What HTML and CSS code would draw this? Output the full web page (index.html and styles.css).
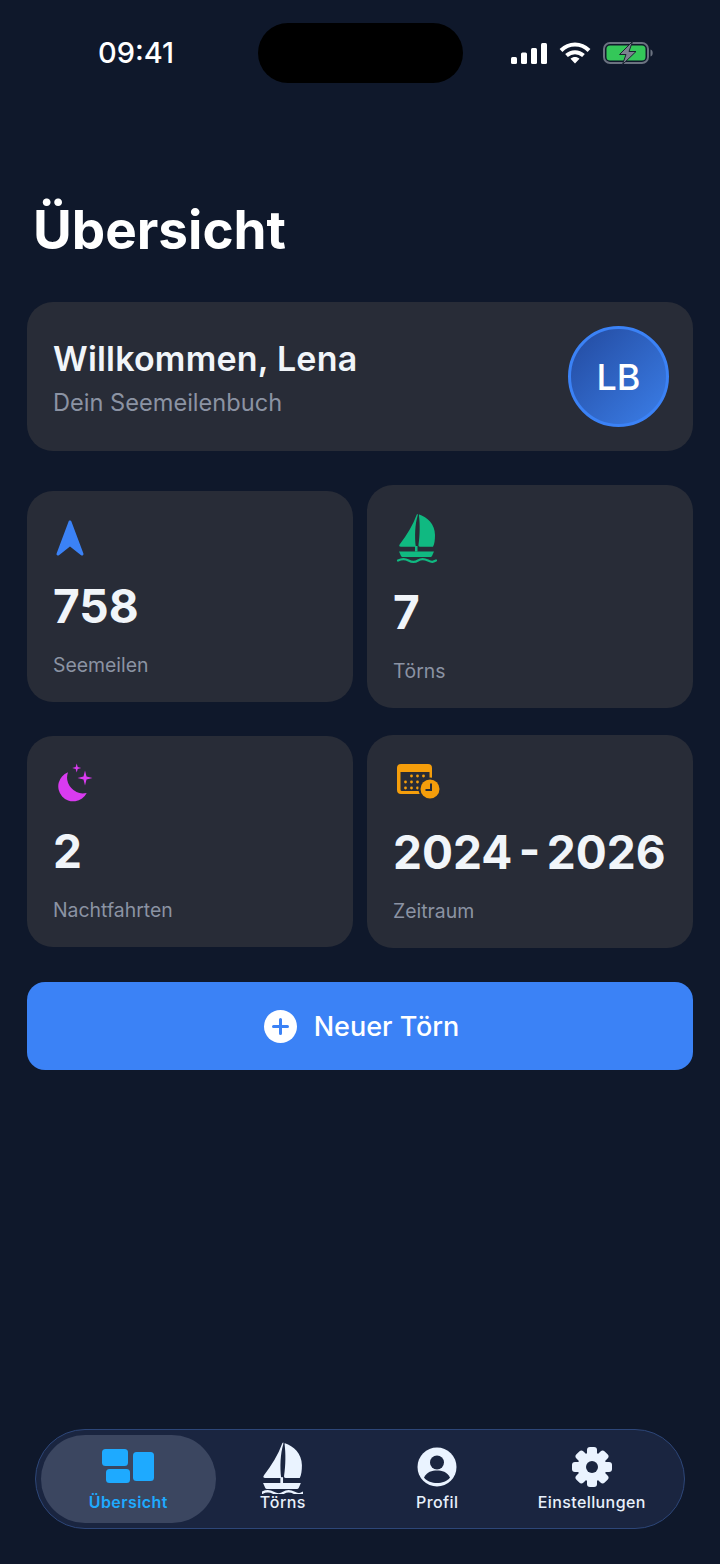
FILE: index.html
```html
<!DOCTYPE html>
<html lang="de">
<head>
<meta charset="utf-8">
<title>Übersicht</title>
<link rel="stylesheet" href="styles.css">
</head>
<body>
<svg class="defs" width="0" height="0" aria-hidden="true">
  <defs>
    <g id="boat">
      <path fill="currentColor" d="M36.800 14.500C37.800 13.500 38 14 37.700 15.500 35 24 34.500 37 35.800 46.700H21C18.900 46.700 18.800 45.500 20 44 27 35 33 25 36.800 14.500Z"/>
      <path fill="currentColor" d="M39.300 14.500C47 17 55 24 55 35 55 40 54.500 44 53 46.700H40C38.500 46.700 38.300 46 38.500 44.500 40 35 40 24 39 16 38.900 14.800 38.900 14.400 39.300 14.500Z"/>
      <path fill="currentColor" d="M35 46h2.500v5.500H35z"/>
      <path fill="currentColor" d="M19 51.500H54L52 56C51.500 56.800 51 57 50 57H23C22 57 21.500 56.800 21 56Z"/>
      <path fill="none" stroke="currentColor" stroke-width="2.200" stroke-linecap="round" d="M18 60.500C22 58.500 25 58.500 28.500 60.500S35 62.500 38 60.500 44 58.500 48 60.500 53 62 56 60.500"/>
    </g>
  </defs>
</svg>
<div class="page">
  <header class="status">
    <span class="time">09:41</span>
    <div class="island"></div>
    <div class="status-icons">
      <svg class="ic-signal" viewBox="0 0 36 21"><rect x="0" y="14" width="6" height="7" rx="1.5"/><rect x="10" y="9.500" width="6" height="11.500" rx="1.500"/><rect x="20" y="5" width="6" height="16" rx="1.500"/><rect x="30" y="0" width="6" height="21" rx="1.500"/></svg>
      <svg class="ic-wifi" viewBox="0 0 32 22"><path class="wifi-arc" d="M2 8.500C10 .5 22 .5 30 8.500"/><path class="wifi-arc" d="M7.500 13.500C12.500 9 19.500 9 24.500 13.500"/><path d="M11.500 16.800C14 14.500 18 14.500 20.500 16.800L16 21.500Z"/></svg>
      <svg class="ic-battery" viewBox="0 0 50 22"><rect x="1" y="1" width="44" height="20" rx="6" class="bat-frame"/><rect x="3.500" y="3.500" width="39" height="15" rx="3.500" class="bat-fill"/><path d="M47.500 7.500c1.500.5 2.200 1.800 2.200 3.500s-.7 3-2.200 3.500z" class="bat-nub"/><path d="M29.500-.5 16.500 12.500H23L19.500 22.500 33 9.500H26Z" class="bat-bolt"/></svg>
    </div>
  </header>

  <main class="content">
    <h1 class="title">Übersicht</h1>

    <section class="welcome">
      <div class="welcome-text">
        <h2 class="welcome-name">Willkommen, Lena</h2>
        <p class="welcome-sub">Dein Seemeilenbuch</p>
      </div>
      <div class="avatar">LB</div>
    </section>

    <section class="stats">
      <article class="stat">
        <svg class="stat-icon icon-arrow" viewBox="53 515 36 46"><path d="M70 522 58 554 70 544.500 82 554Z"/></svg>
        <div class="stat-value">758</div>
        <div class="stat-label">Seemeilen</div>
      </article>
      <article class="stat">
        <svg class="stat-icon icon-boat" viewBox="13 9 46 58"><use href="#boat"/></svg>
        <div class="stat-value">7</div>
        <div class="stat-label">Törns</div>
      </article>
      <article class="stat">
        <svg class="stat-icon icon-moon" viewBox="53 760 46 46">
          <path d="M68 772.300A15 15 0 1 0 86.700 793 16 16 0 0 1 68 772.300Z"/>
          <path d="M85 770.500 86.500 776.500 92.500 778 86.500 779.500 85 785.500 83.500 779.500 77.500 778 83.500 776.500Z"/>
          <path d="M76.700 763.500 77.700 767 81.200 768 77.700 769 76.700 772.500 75.700 769 72.200 768 75.700 767Z"/>
        </svg>
        <div class="stat-value">2</div>
        <div class="stat-label">Nachtfahrten</div>
      </article>
      <article class="stat">
        <svg class="stat-icon icon-cal" viewBox="393 759 48 48">
          <path class="cal-body" d="M401 764h27a4 4 0 0 1 4 4v22a4 4 0 0 1-4 4h-27a4 4 0 0 1-4-4v-22a4 4 0 0 1 4-4Zm-.5 8v17.500a1.500 1.500 0 0 0 1.500 1.500h26a1.500 1.500 0 0 0 1.500-1.500V772Z"/>
          <g class="cal-dots">
            <circle cx="411.500" cy="776" r="1.400"/><circle cx="417.500" cy="776" r="1.400"/><circle cx="423.500" cy="776" r="1.400"/>
            <circle cx="405.500" cy="782" r="1.400"/><circle cx="411.500" cy="782" r="1.400"/><circle cx="417.500" cy="782" r="1.400"/><circle cx="423.500" cy="782" r="1.400"/>
            <circle cx="405.500" cy="788" r="1.400"/><circle cx="411.500" cy="788" r="1.400"/><circle cx="417.500" cy="788" r="1.400"/>
          </g>
          <circle class="cal-ring" cx="430" cy="789" r="11.500"/>
          <circle class="cal-clock" cx="430" cy="789" r="9.500"/>
          <path class="cal-hand" d="M431 783.500V790H425.500"/>
        </svg>
        <div class="stat-value">2024 - 2026</div>
        <div class="stat-label">Zeitraum</div>
      </article>
    </section>

    <button class="cta" type="button">
      <svg class="cta-icon" viewBox="0 0 33 33"><circle cx="16.500" cy="16.500" r="16.500"/><path d="M16.500 9.500v14M9.500 16.500h14"/></svg>
      <span>Neuer Törn</span>
    </button>
  </main>

  <nav class="nav">
    <a class="nav-item active">
      <svg class="nav-icon" viewBox="0 0 52 36"><rect x="0" y="0" width="26" height="17" rx="3.500"/><rect x="4" y="20" width="24" height="14" rx="3.500"/><rect x="31" y="3" width="21" height="29" rx="3.500"/></svg>
      <span>Übersicht</span>
    </a>
    <a class="nav-item">
      <svg class="nav-icon nav-boat" viewBox="18 13.500 38 48"><use href="#boat"/></svg>
      <span>Törns</span>
    </a>
    <a class="nav-item">
      <svg class="nav-icon" viewBox="0 0 40 40"><circle cx="20" cy="20" r="19.500"/><circle class="cut" cx="20" cy="15.500" r="7"/><path class="cut" d="M7 30.500C10 24.500 15 23.500 20 23.500S30 24.500 33 30.500C30 34.500 25 36 20 36S10 34.500 7 30.500Z"/></svg>
      <span>Profil</span>
    </a>
    <a class="nav-item">
      <svg class="nav-icon" viewBox="0 0 40 40">
        <g><rect x="15" y="0" width="10" height="40" rx="3"/><rect x="15" y="0" width="10" height="40" rx="3" transform="rotate(45 20 20)"/><rect x="15" y="0" width="10" height="40" rx="3" transform="rotate(90 20 20)"/><rect x="15" y="0" width="10" height="40" rx="3" transform="rotate(135 20 20)"/></g>
        <circle cx="20" cy="20" r="14.500"/><circle class="cut" cx="20" cy="20" r="6"/>
      </svg>
      <span>Einstellungen</span>
    </a>
  </nav>
</div>
</body>
</html>
```

FILE: styles.css
```css
* { box-sizing: border-box; margin: 0; padding: 0; }

html, body {
  width: 720px;
  height: 1564px;
  overflow: hidden;
  background: #0f182b;
}

body {
  font-family: Inter, "Liberation Sans", sans-serif;
  color: #f8fafc;
}

.page {
  width: 720px;
  height: 1564px;
  display: flex;
  flex-direction: column;
  padding-bottom: 35px;
}

.defs { display: block; position: absolute; }

/* Status bar */
.status {
  height: 105px;
  padding-top: 23px;
  display: grid;
  grid-template-columns: 258px 205px 1fr;
  align-items: start;
}

.time {
  padding-left: 98px;
  height: 60px;
  font-size: 29px;
  font-weight: 500;
  line-height: 60px;
  color: #fff;
}

.island {
  height: 60px;
  border-radius: 30px;
  background: #000;
}

.status-icons {
  height: 60px;
  padding-left: 48px;
  display: flex;
  align-items: center;
  gap: 12px;
}

.ic-signal { width: 36px; height: 21px; fill: #fff; }
.ic-wifi { width: 32px; height: 22px; fill: #fff; }
.wifi-arc { fill: none; stroke: #fff; stroke-width: 4; }
.ic-battery { width: 50px; height: 22px; overflow: visible; }
.bat-frame { fill: none; stroke: #6b7280; stroke-width: 2; }
.bat-fill { fill: #34c759; }
.bat-nub { fill: #6b7280; }
.bat-bolt { fill: #7c8290; stroke: #1a2230; stroke-width: 1; stroke-linejoin: round; }

/* Content */
.content {
  flex: 1;
  padding: 0 27px;
  display: flex;
  flex-direction: column;
}

.title {
  margin: 93px 0 40px 6px;
  font-size: 53px;
  line-height: 64px;
  font-weight: 700;
  color: #fff;
}

.welcome {
  height: 149px;
  padding: 0 24px 0 26px;
  display: flex;
  justify-content: space-between;
  align-items: center;
  background: #282c37;
  border-radius: 26px;
}

.welcome-text { padding-top: 4px; }

.welcome-name {
  font-size: 34px;
  line-height: 40px;
  font-weight: 600;
  letter-spacing: 0.2px;
  color: #f1f5f9;
}

.welcome-sub {
  margin-top: 9px;
  font-size: 23.600px;
  line-height: 30px;
  color: #8b93a3;
}

.avatar {
  width: 101px;
  height: 101px;
  border-radius: 50%;
  border: 3px solid #3b82f6;
  background: linear-gradient(135deg, #234a9f, #3b7ee8);
  display: flex;
  align-items: center;
  justify-content: center;
  font-size: 36px;
  font-weight: 500;
  color: #fff;
}

/* Stats */
.stats {
  margin-top: 34px;
  display: grid;
  grid-template-columns: 326px 326px;
  column-gap: 14px;
  row-gap: 27px;
  align-items: center;
}

.stat {
  padding: 24px 26px 26px;
  background: #282c37;
  border-radius: 26px;
}

.stat-icon { display: block; }
.icon-arrow { width: 36px; height: 46px; fill: #3b82f6; stroke: #3b82f6; stroke-width: 3; stroke-linejoin: round; }
.icon-boat { width: 46px; height: 58px; color: #10b981; }
.icon-moon { width: 46px; height: 46px; fill: #d93bf0; }
.icon-cal { width: 48px; height: 48px; }
.cal-body { fill: #f59e0b; fill-rule: evenodd; }
.cal-dots { fill: #f59e0b; }
.cal-ring { fill: #282c37; }
.cal-clock { fill: #f59e0b; }
.cal-hand { fill: none; stroke: #282c37; stroke-width: 2; }

.stat-value {
  margin-top: 19px;
  font-size: 46px;
  line-height: 52px;
  font-weight: 700;
  word-spacing: -4.500px;
  color: #f1f5f9;
  white-space: nowrap;
}

.stat-label {
  margin-top: 22px;
  font-size: 19.400px;
  line-height: 22px;
  color: #8b93a3;
}

/* CTA */
.cta {
  margin-top: 34px;
  height: 88px;
  padding-left: 3px;
  display: flex;
  align-items: center;
  justify-content: center;
  gap: 17px;
  border: 0;
  border-radius: 18px;
  background: #3b82f6;
  color: #fff;
  font-family: inherit;
  font-size: 27px;
  font-weight: 500;
}

.cta-icon { width: 33px; height: 33px; }
.cta-icon circle { fill: #fff; }
.cta-icon path { fill: none; stroke: #3b82f6; stroke-width: 3; stroke-linecap: round; }

/* Bottom nav */
.nav {
  width: 650px;
  height: 100px;
  margin: 0 auto;
  padding: 5px 15px;
  display: grid;
  grid-template-columns: repeat(4, 1fr);
  border: 1.5px solid #2d4678;
  border-radius: 50px;
  background: #1a2540;
}

.nav-item {
  display: flex;
  flex-direction: column;
  align-items: center;
  justify-content: flex-end;
  padding-bottom: 11px;
  font-size: 16px;
  line-height: 20px;
  font-weight: 500;
  letter-spacing: 0.400px;
  color: #e8f0fb;
  white-space: nowrap;
}

.nav-item.active {
  margin: 0 -10px;
  border-radius: 44px;
  background: #3b4660;
  color: #1eaaff;
  font-weight: 600;
}

.nav-icon {
  width: 40px;
  height: 40px;
  margin-bottom: 5px;
  fill: #eaf3ff;
}

.nav-icon .cut { fill: #1a2540; }

.active .nav-icon {
  width: 52px;
  height: 36px;
  margin-bottom: 7px;
  fill: #1eaaff;
}

.nav-icon.nav-boat {
  width: 41px;
  height: 52px;
  margin-bottom: -2px;
  color: #eaf3ff;
}
```
